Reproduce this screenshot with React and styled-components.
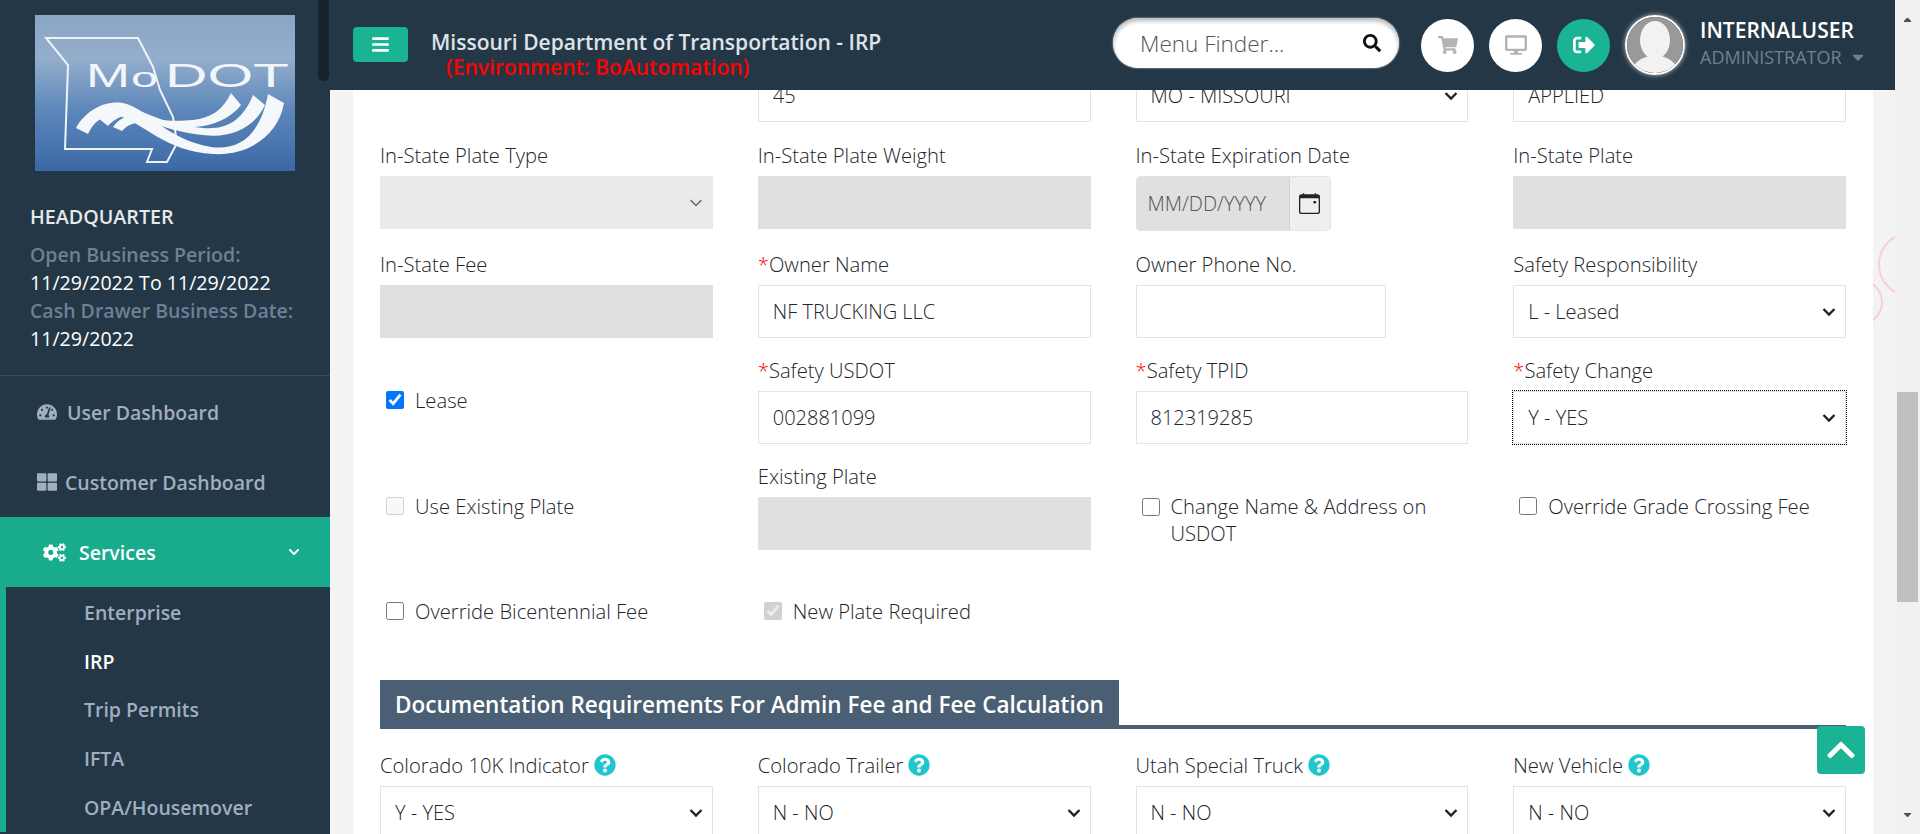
import React from 'react';
import styled, { createGlobalStyle } from 'styled-components';
import {
  FaBars, FaSearch, FaShoppingCart, FaDesktop, FaSignOutAlt, FaCaretDown, FaCaretUp,
  FaTachometerAlt, FaThLarge, FaCogs, FaChevronDown, FaChevronUp, FaQuestionCircle,
} from 'react-icons/fa';
import { BsCalendarEvent } from 'react-icons/bs';

const chevron = (color, width) =>
  `url("data:image/svg+xml,%3Csvg xmlns='http://www.w3.org/2000/svg' width='14' height='10' viewBox='0 0 14 10'%3E%3Cpath d='M1.5 2 L7 7.5 L12.5 2' fill='none' stroke='${color}' stroke-width='${width}'/%3E%3C/svg%3E")`;

const GlobalStyle = createGlobalStyle`
  html, body { margin: 0; padding: 0; height: 100%; overflow: hidden; }
  body { font-family: "Open Sans", "Liberation Sans", sans-serif; background: #f3f3f3; color: #212529; }
  * { box-sizing: border-box; }
`;

const Shell = styled.div`
  display: flex;
  width: 1920px;
  height: 834px;
  overflow: hidden;
`;

const Sidebar = styled.aside`
  position: relative;
  flex: 0 0 330px;
  background: #243746;
  overflow: hidden;
`;

const SideThumb = styled.div`
  position: absolute;
  top: -8px;
  right: 1px;
  width: 11px;
  height: 89px;
  border-radius: 6px;
  background: #17242f;
`;

const LogoWrap = styled.div`
  padding: 15px 0 0 35px;
  line-height: 0;
`;

const Branch = styled.div`
  padding: 32px 0 22px 30px;
  border-bottom: 1px solid #3a4c5b;
  line-height: 28px;
`;

const BranchName = styled.div`
  color: #e6e9ec;
  font-size: 19.7px;
  font-weight: 600;
  margin-bottom: 10px;
`;

const BranchLabel = styled.div`
  color: #6d8096;
  font-size: 19.5px;
  font-weight: 600;
  white-space: nowrap;
`;

const BranchValue = styled.div`
  color: #fff;
  font-size: 19.6px;
  white-space: nowrap;
`;

const Menu = styled.nav`
  padding-top: 1px;
`;

const MenuItem = styled.a`
  display: flex;
  align-items: center;
  height: 70px;
  padding-left: ${(p) => p.$indent}px;
  gap: ${(p) => p.$gap}px;
  font-size: 19.5px;
  font-weight: 600;
  color: ${(p) => (p.$active ? '#fff' : '#a1adc0')};
  background: ${(p) => (p.$active ? '#18ab8c' : 'transparent')};
`;

const MenuCaret = styled.span`
  margin-left: auto;
  margin-right: 30px;
  display: flex;
  font-size: 12px;
`;

const SubMenu = styled.div`
  border-left: 6px solid #18ab8c;
  padding: 2px 0 0 78px;
`;

const SubItem = styled.a`
  display: block;
  height: 48.7px;
  line-height: 48px;
  font-size: 19.5px;
  font-weight: 600;
  color: ${(p) => (p.$current ? '#fff' : '#a1adc0')};
`;

const Main = styled.div`
  flex: 0 0 1565px;
  display: flex;
  flex-direction: column;
  height: 834px;
`;

const Topbar = styled.header`
  position: relative;
  z-index: 3;
  flex: 0 0 90px;
  display: flex;
  align-items: center;
  background: #243746;
  padding-left: 23px;
`;

const MenuToggle = styled.button`
  width: 55px;
  height: 35px;
  margin-top: -1px;
  border: 0;
  border-radius: 4px;
  background: #1ab394;
  color: #fff;
  font-size: 19px;
  display: flex;
  align-items: center;
  justify-content: center;
`;

const TitleBlock = styled.div`
  margin-left: 23px;
  width: 682px;
  padding-top: 17px;
`;

const Title = styled.div`
  color: #dfe3e8;
  font-size: 21px;
  font-weight: 600;
  line-height: 26px;
  white-space: nowrap;
`;

const EnvNote = styled.div`
  color: #f00;
  font-size: 21px;
  font-weight: 600;
  line-height: 24px;
  padding-left: 15px;
  white-space: nowrap;
`;

const SearchBox = styled.div`
  width: 286px;
  height: 50px;
  margin-top: -4px;
  border-radius: 25px;
  background: #fff;
  box-shadow: inset 0 3px 4px #b9b9b9, 0 0 2px #ddd;
  display: flex;
  align-items: center;
  padding: 0 18px 0 27px;
  font-size: 22.5px;
  font-weight: 300;
  color: #555;
  justify-content: space-between;
`;

const SearchIcon = styled(FaSearch)`
  color: #111;
  font-size: 18px;
`;

const RoundButton = styled.div`
  width: 53px;
  height: 53px;
  margin-left: ${(p) => p.$left}px;
  border-radius: 50%;
  background: ${(p) => (p.$primary ? '#1ab394' : '#fff')};
  color: ${(p) => (p.$primary ? '#fff' : '#b4b4b4')};
  display: flex;
  align-items: center;
  justify-content: center;
  font-size: ${(p) => p.$icon || 20}px;
`;

const Avatar = styled.div`
  width: 60px;
  height: 60px;
  margin-left: 15px;
  border-radius: 50%;
  border: 2px solid #fff;
  box-shadow: 0 0 5px rgba(255, 255, 255, 0.7);
  overflow: hidden;
  line-height: 0;
`;

const UserBlock = styled.div`
  margin: -2px 0 0 15px;
`;

const UserName = styled.div`
  color: #fff;
  font-size: 21px;
  font-weight: 600;
  line-height: 26px;
`;

const UserRole = styled.div`
  display: flex;
  align-items: center;
  gap: 7px;
  color: #6d8096;
  font-size: 18px;
  line-height: 28px;
`;

const Content = styled.main`
  position: relative;
  flex: 1;
  overflow: hidden;
  padding: 0 22px 0 23px;
`;

const Ring = styled.div`
  position: absolute;
  left: ${(p) => p.$left}px;
  top: ${(p) => p.$top}px;
  width: ${(p) => p.$size}px;
  height: ${(p) => p.$size}px;
  border-radius: 50%;
  border: 2px solid #fccdd5;
`;

// the page is scrolled in the reference, the first row sits under the top bar
const Card = styled.section`
  position: relative;
  margin-top: -21px;
  padding: 0 27px;
  height: 900px;
  background: #fff;
`;

const Row = styled.div`
  display: grid;
  grid-template-columns: repeat(4, 1fr);
  column-gap: 45px;
  margin-top: ${(p) => p.$top || 0}px;
`;

const Field = styled.div`
  min-width: 0;
`;

const Label = styled.label`
  display: flex;
  align-items: center;
  gap: 3px;
  height: 24px;
  margin-bottom: 9px;
  font-size: 20.2px;
  font-weight: 300;
  line-height: 24px;
  color: #212529;
  white-space: nowrap;
`;

const Required = styled.span`
  color: #f00;
  margin-right: -3px;
`;

const HelpIcon = styled(FaQuestionCircle)`
  color: #20c6cf;
  font-size: 22px;
  margin-left: 2px;
`;

const Input = styled.input`
  display: block;
  width: ${(p) => p.$width || '100%'};
  height: 53px;
  padding: 0 14px;
  border: 1px solid #e3e3e3;
  border-radius: 0;
  background: #fff;
  font: 300 20px "Open Sans", sans-serif;
  color: #212529;
  outline: none;
  &:disabled {
    background: #e0e0e0;
    border-color: #e0e0e0;
  }
`;

const Select = styled.select`
  display: block;
  width: 100%;
  height: 53px;
  padding: 0 14px;
  border: 1px solid #e3e3e3;
  border-radius: 0;
  appearance: none;
  background: #fff ${chevron('%23222', 2.4)} no-repeat right 9px center;
  font: 300 20px "Open Sans", sans-serif;
  color: #212529;
  outline: ${(p) => (p.$focused ? '1px dotted #000' : 'none')};
  &:disabled {
    background: #eaeaea ${chevron('%23666', 1.5)} no-repeat right 9px center;
    border-color: #eaeaea;
    opacity: 1;
  }
`;

const DateGroup = styled.div`
  display: flex;
  width: 195px;
  height: 55px;
  margin-bottom: -2px;
  border: 1px solid #e3e3e3;
  border-radius: 4px;
  overflow: hidden;
`;

const DateText = styled.div`
  flex: 1;
  display: flex;
  align-items: center;
  padding-left: 11px;
  background: #e0e0e0;
  font-size: 20px;
  font-weight: 300;
  color: #555;
  white-space: nowrap;
`;

const DateAddon = styled.div`
  flex: 0 0 41px;
  display: flex;
  align-items: center;
  justify-content: center;
  background: #efefef;
  border-left: 1px solid #d2d2d2;
  color: #222;
  font-size: 21px;
`;

const CheckCell = styled.label`
  display: flex;
  align-items: ${(p) => (p.$wrap ? 'flex-start' : 'center')};
  gap: 11px;
  padding-left: 6px;
  align-self: ${(p) => (p.$wrap ? 'start' : 'center')};
  font-size: 20.2px;
  font-weight: 300;
  line-height: ${(p) => (p.$wrap ? 27 : 34)}px;
  color: #212529;
  margin-top: ${(p) => p.$shift || 0}px;
`;

const Check = styled.input.attrs({ type: 'checkbox', readOnly: true })`
  flex: 0 0 18px;
  width: 18px;
  height: 18px;
  margin: ${(p) => (p.$wrap ? '5px' : '0')} 0 0 0;
`;

const SectionHead = styled.div`
  margin-top: 52px;
  height: 49px;
  border-bottom: 4px solid #4a5f74;
`;

const SectionTitle = styled.h3`
  display: inline-flex;
  align-items: center;
  height: 49px;
  margin: 0;
  padding: 0 15px;
  background: #4a5f74;
  color: #fff;
  font-size: 22.5px;
  font-weight: 600;
`;

const ScrollTop = styled.button`
  position: fixed;
  right: 55px;
  bottom: 60px;
  z-index: 4;
  width: 48px;
  height: 48px;
  border: 0;
  border-radius: 4px;
  background: #1ab394;
  color: #fff;
  font-size: 32px;
  display: flex;
  align-items: center;
  justify-content: center;
`;

const PageScroll = styled.div`
  position: relative;
  z-index: 5;
  flex: 0 0 25px;
  display: flex;
  flex-direction: column;
  align-items: center;
  background: #f1f1f1;
  color: #505050;
  font-size: 13px;
`;

const ScrollArrow = styled.div`
  display: flex;
  height: 40px;
  align-items: ${(p) => (p.$down ? 'flex-end' : 'flex-start')};
  padding: 13px 0;
`;

const ScrollThumb = styled.div`
  width: 21px;
  height: 210px;
  margin-top: 352px;
  background: #bfbfbf;
`;

const Spacer = styled.div`
  flex: 1;
`;

const ModotLogo = () => (
  <svg width="260" height="156" viewBox="0 0 260 156">
    <defs>
      <linearGradient id="logoBg" x1="0" y1="0" x2="0" y2="1">
        <stop offset="0" stopColor="#8ba5c4" />
        <stop offset="0.28" stopColor="#93aecb" />
        <stop offset="0.6" stopColor="#5e88bb" />
        <stop offset="1" stopColor="#3b68a6" />
      </linearGradient>
    </defs>
    <rect width="260" height="156" fill="url(#logoBg)" />
    <path
      d="M11 23H103L118 52L125 75L138 102L142 128L132 147H112L117 134H30L33 50Z"
      fill="none"
      stroke="#eef3f8"
      strokeWidth="2"
    />
    <g fill="#f2f5f9" fontFamily="Liberation Sans, sans-serif">
      <text x="51" y="72" fontSize="33" textLength="44" lengthAdjust="spacingAndGlyphs">M</text>
      <text x="96" y="72" fontSize="27" textLength="27" lengthAdjust="spacingAndGlyphs">o</text>
      <text x="130" y="72" fontSize="33" textLength="124" lengthAdjust="spacingAndGlyphs">DOT</text>
    </g>
    <g fill="#f5f8fb">
      <path d="M41 113C50 96 70 85 88 88C112 93 130 124 176 132C206 136 226 118 233 79L249 88C243 122 212 141 178 139C132 137 108 108 84 101C70 98 59 106 53 119Z" />
      <path d="M63 103C71 93 84 90 96 93C116 99 132 110 168 113C192 115 208 105 218 80L230 90C220 112 196 124 168 120C130 116 112 104 94 101C86 100 79 105 73 111Z" />
      <path d="M78 112C85 102 95 99 106 101C122 105 136 107 158 105C176 103 188 95 196 78L206 90C196 103 178 111 160 112C136 113 122 109 106 108C98 107 92 111 87 116Z" />
    </g>
  </svg>
);

const AvatarArt = () => (
  <svg width="56" height="56" viewBox="0 0 56 56">
    <rect width="56" height="56" fill="#999" />
    <ellipse cx="28" cy="23" rx="15" ry="19" fill="#f2f2f2" />
    <path d="M4 56C6 44 16 41 22 39H34C40 41 50 44 52 56Z" fill="#f2f2f2" />
  </svg>
);

const TextField = ({ label, req, value, disabled, width }) => (
  <Field>
    {label && <Label>{req && <Required>*</Required>}{label}</Label>}
    <Input defaultValue={value} disabled={disabled} $width={width} />
  </Field>
);

const SelectField = ({ label, req, value, disabled, focused, help }) => (
  <Field>
    {label && (
      <Label>
        {req && <Required>*</Required>}{label}{help && <HelpIcon />}
      </Label>
    )}
    <Select defaultValue={value} disabled={disabled} $focused={focused}>
      <option>{value}</option>
    </Select>
  </Field>
);

const App = () => {
  return (
    <>
      <GlobalStyle />
      <Shell>
        <Sidebar>
          <SideThumb />
          <LogoWrap><ModotLogo /></LogoWrap>
          <Branch>
            <BranchName>HEADQUARTER</BranchName>
            <BranchLabel>Open Business Period:</BranchLabel>
            <BranchValue>11/29/2022 To 11/29/2022</BranchValue>
            <BranchLabel>Cash Drawer Business Date:</BranchLabel>
            <BranchValue>11/29/2022</BranchValue>
          </Branch>
          <Menu>
            <MenuItem $indent={37} $gap={10}><FaTachometerAlt size={20} />User Dashboard</MenuItem>
            <MenuItem $indent={37} $gap={8}><FaThLarge size={20} />Customer Dashboard</MenuItem>
            <MenuItem $indent={43} $gap={13} $active>
              <FaCogs size={23} />Services
              <MenuCaret><FaChevronDown /></MenuCaret>
            </MenuItem>
            <SubMenu>
              <SubItem>Enterprise</SubItem>
              <SubItem $current>IRP</SubItem>
              <SubItem>Trip Permits</SubItem>
              <SubItem>IFTA</SubItem>
              <SubItem>OPA/Housemover</SubItem>
            </SubMenu>
          </Menu>
        </Sidebar>

        <Main>
          <Topbar>
            <MenuToggle><FaBars /></MenuToggle>
            <TitleBlock>
              <Title>Missouri Department of Transportation - IRP</Title>
              <EnvNote>(Environment: BoAutomation)</EnvNote>
            </TitleBlock>
            <SearchBox>Menu Finder...<SearchIcon /></SearchBox>
            <RoundButton $left={22}><FaShoppingCart /></RoundButton>
            <RoundButton $left={15} $icon={22}><FaDesktop /></RoundButton>
            <RoundButton $left={15} $primary $icon={22}><FaSignOutAlt /></RoundButton>
            <Avatar><AvatarArt /></Avatar>
            <UserBlock>
              <UserName>INTERNALUSER</UserName>
              <UserRole>ADMINISTRATOR <FaCaretDown /></UserRole>
            </UserBlock>
          </Topbar>

          <Content>
            <Ring $left={1548} $top={142} $size={65} />
            <Ring $left={1507} $top={189} $size={46} />
            <Card>
              <Row $top={0}>
                <Field />
                <TextField value="45" />
                <SelectField value="MO - MISSOURI" />
                <TextField value="APPLIED" />
              </Row>
              <Row $top={21}>
                <SelectField label="In-State Plate Type" value="" disabled />
                <TextField label="In-State Plate Weight" disabled />
                <Field>
                  <Label>In-State Expiration Date</Label>
                  <DateGroup>
                    <DateText>MM/DD/YYYY</DateText>
                    <DateAddon><BsCalendarEvent /></DateAddon>
                  </DateGroup>
                </Field>
                <TextField label="In-State Plate" disabled />
              </Row>
              <Row $top={23}>
                <TextField label="In-State Fee" disabled />
                <TextField label="Owner Name" req value="NF TRUCKING LLC" />
                <TextField label="Owner Phone No." width="250px" />
                <SelectField label="Safety Responsibility" value="L - Leased" />
              </Row>
              <Row $top={20}>
                <CheckCell $shift={-2}><Check defaultChecked />Lease</CheckCell>
                <TextField label="Safety USDOT" req value="002881099" />
                <TextField label="Safety TPID" req value="812319285" />
                <SelectField label="Safety Change" req value="Y - YES" focused />
              </Row>
              <Row $top={20}>
                <CheckCell $shift={-3}><Check disabled />Use Existing Plate</CheckCell>
                <TextField label="Existing Plate" disabled />
                <CheckCell $wrap $shift={29}><Check $wrap />Change Name &amp; Address on USDOT</CheckCell>
                <CheckCell $shift={-3}><Check />Override Grade Crossing Fee</CheckCell>
              </Row>
              <Row $top={44}>
                <CheckCell><Check />Override Bicentennial Fee</CheckCell>
                <CheckCell><Check disabled defaultChecked />New Plate Required</CheckCell>
              </Row>
              <SectionHead>
                <SectionTitle>Documentation Requirements For Admin Fee and Fee Calculation</SectionTitle>
              </SectionHead>
              <Row $top={24}>
                <SelectField label="Colorado 10K Indicator" value="Y - YES" help />
                <SelectField label="Colorado Trailer" value="N - NO" help />
                <SelectField label="Utah Special Truck" value="N - NO" help />
                <SelectField label="New Vehicle" value="N - NO" help />
              </Row>
            </Card>
          </Content>
        </Main>

        <PageScroll>
          <ScrollArrow><FaCaretUp /></ScrollArrow>
          <ScrollThumb />
          <Spacer />
          <ScrollArrow $down><FaCaretDown /></ScrollArrow>
        </PageScroll>
      </Shell>
      <ScrollTop><FaChevronUp /></ScrollTop>
    </>
  );
};

export default App;
